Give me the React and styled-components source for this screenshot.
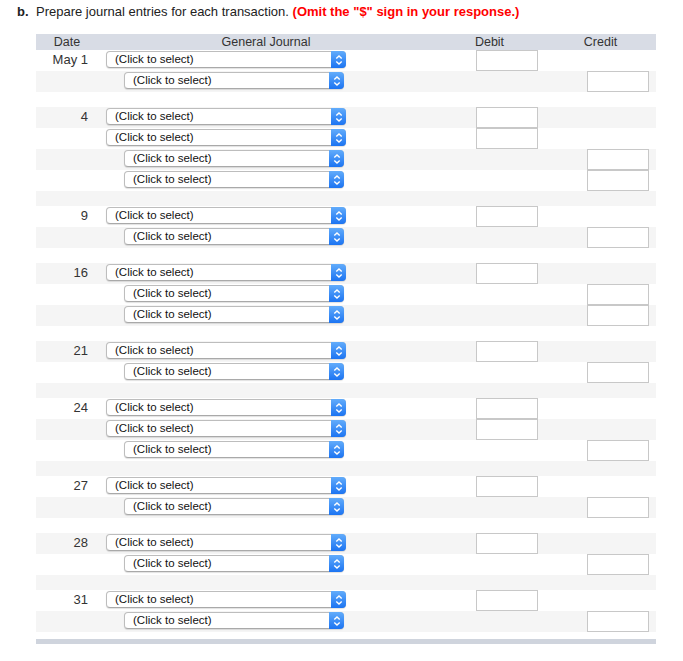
import React from 'react';
import styled, { createGlobalStyle } from 'styled-components';

const entries = [
    { date: 'May 1', lines: ['D', 'C'] },
    { date: '4', lines: ['D', 'D', 'C', 'C'] },
    { date: '9', lines: ['D', 'C'] },
    { date: '16', lines: ['D', 'C', 'C'] },
    { date: '21', lines: ['D', 'C'] },
    { date: '24', lines: ['D', 'D', 'C'] },
    { date: '27', lines: ['D', 'C'] },
    { date: '28', lines: ['D', 'C'] },
    { date: '31', lines: ['D', 'C'] },
];

function Chevrons() {
    return (
        <svg width="8" height="12" viewBox="0 0 8 12">
            <path d="M1.3 4.6 L4 1.9 L6.7 4.6" fill="none" stroke="#fff" strokeWidth="1.4" />
            <path d="M1.3 7.4 L4 10.1 L6.7 7.4" fill="none" stroke="#fff" strokeWidth="1.4" />
        </svg>
    );
}

function FakeSelect({ indent }) {
    return (
        <SelectBox indent={indent}>
            <SelectText>(Click to select)</SelectText>
            <SelectButton>
                <Chevrons />
            </SelectButton>
        </SelectBox>
    );
}

function App() {
    // build flat list of rows so striping follows the table order
    const rows = [];
    entries.forEach((entry, gi) => {
        entry.lines.forEach((side, li) => {
            rows.push({ kind: 'line', date: li === 0 ? entry.date : '', side, key: `${gi}-${li}` });
        });
        if (gi < entries.length - 1) rows.push({ kind: 'blank', key: `b-${gi}` });
    });

    return (
        <>
            <GlobalStyle />
            <Page>
                <Title>
                    <Label>b.</Label>
                    <span>
                        Prepare journal entries for each transaction.{' '}
                        <Warn>(Omit the "$" sign in your response.)</Warn>
                    </span>
                </Title>
                <Table>
                    <HeaderRow>
                        <HeadCell>Date</HeadCell>
                        <HeadCell>General Journal</HeadCell>
                        <HeadCell>Debit</HeadCell>
                        <HeadCell>Credit</HeadCell>
                    </HeaderRow>
                    {rows.map((row, i) =>
                        row.kind === 'blank' ? (
                            <BlankRow key={row.key} striped={i % 2 === 1} />
                        ) : (
                            <Row key={row.key} striped={i % 2 === 1}>
                                <DateCell>{row.date}</DateCell>
                                <JournalCell>
                                    <FakeSelect indent={row.side === 'C'} />
                                </JournalCell>
                                <AmountCell>{row.side === 'D' && <AmountInput />}</AmountCell>
                                <AmountCell>{row.side === 'C' && <AmountInput />}</AmountCell>
                            </Row>
                        )
                    )}
                    <BottomBar />
                </Table>
            </Page>
        </>
    );
}

export default App;


const GlobalStyle = createGlobalStyle`
    body {
        margin: 0;
        background: #fff;
        font-family: "Liberation Sans", Arial, sans-serif;
        color: #333;
    }
`

const Page = styled.div`
    padding: 4px 0 20px 17px;
`

const Title = styled.div`
    display: flex;
    font-size: 13px;
    line-height: 16px;
    color: #222;
`

const Label = styled.span`
    width: 19px;
    font-weight: bold;
`

const Warn = styled.span`
    color: #f00;
    font-weight: bold;
`

const Table = styled.div`
    width: 620px;
    margin: 14px 0 0 19px;
`

const grid = `
    display: grid;
    grid-template-columns: 62px 336px 111px 111px;
`

const HeaderRow = styled.div`
    ${grid}
    height: 16px;
    background: #d8dce5;
`

const HeadCell = styled.div`
    text-align: center;
    font-size: 12.5px;
    line-height: 17px;
    color: #333;
`

const Row = styled.div`
    ${grid}
    height: 21px;
    background: ${props => props.striped ? '#f5f5f5' : '#fff'};
`

const BlankRow = styled.div`
    height: 15px;
    background: ${props => props.striped ? '#f5f5f5' : '#fff'};
`

const DateCell = styled.div`
    text-align: right;
    padding-right: 10px;
    font-size: 13px;
    line-height: 20px;
    color: #333;
`

const JournalCell = styled.div`
    padding: 1px 0 0 8px;
`

const SelectBox = styled.div`
    display: flex;
    align-items: stretch;
    box-sizing: border-box;
    height: 17px;
    width: ${props => props.indent ? '220px' : '240px'};
    margin-left: ${props => props.indent ? '18px' : '0'};
    background: #fff;
    border: 1px solid #bdbdbd;
    border-bottom-color: #a9a9a9;
    border-radius: 4px;
    box-shadow: 0 1px 1px rgba(0, 0, 0, 0.12);
`

const SelectText = styled.span`
    flex: 1;
    padding-left: 8px;
    font-size: 11.5px;
    line-height: 15px;
    color: #111;
    white-space: nowrap;
`

const SelectButton = styled.div`
    width: 15px;
    margin: -1px -1px -1px 0;
    display: flex;
    align-items: center;
    justify-content: center;
    border-radius: 0 4px 4px 0;
    background: linear-gradient(#62acfb, #1c74f2);
`

const AmountCell = styled.div`
    display: flex;
    justify-content: flex-end;
    padding-right: 7px;
`

const AmountInput = styled.div`
    box-sizing: border-box;
    width: 62px;
    height: 21px;
    background: #fff;
    border: 1px solid #c8c8c8;
`

const BottomBar = styled.div`
    height: 5px;
    margin-top: 7px;
    background: #cfd4dd;
`
